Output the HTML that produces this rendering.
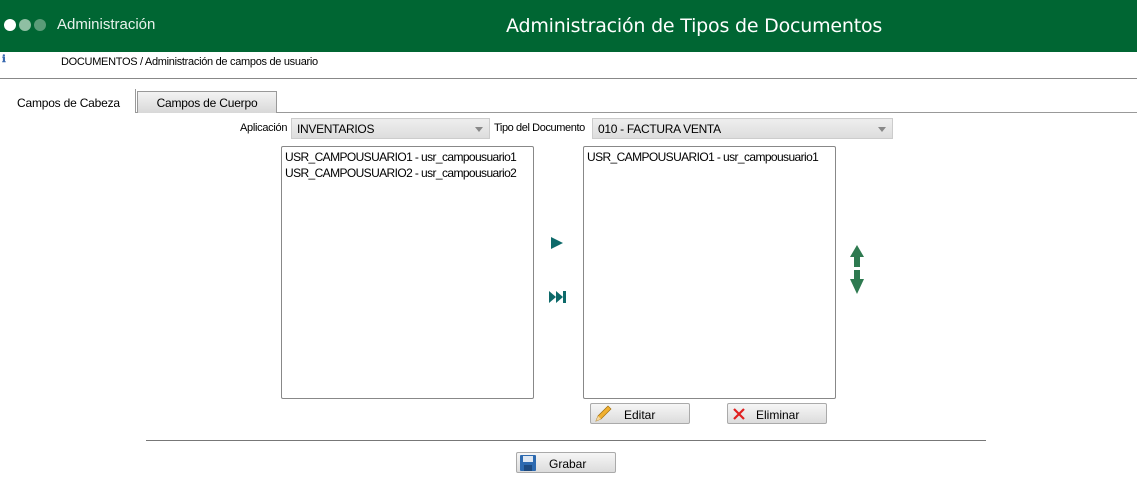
<!DOCTYPE html>
<html><head><meta charset="utf-8"><style>
body{margin:0;width:1137px;height:479px;background:#fff;font-family:"Liberation Sans",sans-serif;font-size:12px;color:#000;position:relative;overflow:hidden}
.a{position:absolute}
.hdr{left:0;top:0;width:1137px;height:52px;background:#006633}
.btn{position:absolute;height:21px;border:1px solid #aaa;border-radius:2px;background:linear-gradient(#f6f6f6,#dcdcdc);box-sizing:border-box;font-size:12px}
.combo{position:absolute;height:21px;background:linear-gradient(#eee,#ddd);border:1px solid #ccc;box-sizing:border-box;font-size:12px;padding:3px 5px;letter-spacing:-0.3px}
.combo:after{content:"";position:absolute;right:6px;top:8px;border-left:4px solid transparent;border-right:4px solid transparent;border-top:5px solid #888}
.list{position:absolute;border:1px solid #888;border-radius:2px;box-sizing:border-box;background:#fff;padding:2px 3px;font-size:12px;line-height:16px;letter-spacing:-0.6px;white-space:nowrap;overflow:hidden}
</style></head><body>
<div class="a hdr"></div>
<div class="a" style="left:4px;top:19px;width:12px;height:12px;border-radius:50%;background:#fff"></div>
<div class="a" style="left:19px;top:19px;width:12px;height:12px;border-radius:50%;background:#8fbfa3"></div>
<div class="a" style="left:34px;top:19px;width:12px;height:12px;border-radius:50%;background:#5a9c78"></div>
<div class="a" style="left:57px;top:16px;color:#e8f2ec;font-size:15px">Administración</div>
<div class="a" style="left:506px;top:15px;color:#fff;font-size:19px;font-family:'DejaVu Sans',sans-serif;letter-spacing:-0.2px">Administración de Tipos de Documentos</div>
<div class="a" style="left:2px;top:54px;color:#3a6ab0;font-size:10px;font-weight:bold">ℹ</div>
<div class="a" style="left:61px;top:56px;font-size:11px;letter-spacing:-0.3px">DOCUMENTOS / Administración de campos de usuario</div>
<div class="a" style="left:0;top:78px;width:1137px;height:1px;background:#888"></div>
<div class="a" style="left:0;top:112px;width:1137px;height:1px;background:#999"></div>
<div class="a" style="left:0;top:89px;width:136px;height:24px;background:#fff;border-right:1px solid #999;box-sizing:border-box"></div>
<div class="a" style="left:17px;top:96px;letter-spacing:-0.2px">Campos de Cabeza</div>
<div class="a" style="left:137px;top:91px;width:140px;height:22px;background:linear-gradient(#f3f3f3,#d8d8d8);border:1px solid #999;border-bottom:none;box-sizing:border-box;text-align:center;padding-top:4px;letter-spacing:-0.2px">Campos de Cuerpo</div>
<div class="a" style="left:240px;top:122px;font-size:11px;letter-spacing:-0.3px">Aplicación</div>
<div class="combo" style="left:291px;top:118px;width:199px">INVENTARIOS</div>
<div class="a" style="left:494px;top:122px;font-size:11px;letter-spacing:-0.4px">Tipo del Documento</div>
<div class="combo" style="left:592px;top:118px;width:301px">010 - FACTURA VENTA</div>
<div class="list" style="left:281px;top:146px;width:253px;height:253px">USR_CAMPOUSUARIO1 - usr_campousuario1<br>USR_CAMPOUSUARIO2 - usr_campousuario2</div>
<div class="list" style="left:583px;top:146px;width:253px;height:253px">USR_CAMPOUSUARIO1 - usr_campousuario1</div>
<svg class="a" style="left:550px;top:236px" width="14" height="14"><path d="M1 1L13 7L1 13Z" fill="#0e6a6a"/></svg>
<svg class="a" style="left:548px;top:290px" width="20" height="14"><path d="M1 1L8 7L1 13Z M8 1L15 7L8 13Z" fill="#0e6a6a"/><rect x="15" y="1" width="3" height="12" fill="#0e6a6a"/></svg>
<svg class="a" style="left:849px;top:244px" width="16" height="52"><path d="M8 1L15 13H11V23H5V13H1Z M5 26H11V35H15L8 50L1 35H5Z" fill="#2e7a50"/></svg>
<div class="btn" style="left:590px;top:403px;width:100px"><svg class="a" style="left:2px;top:1px" width="20" height="18"><path d="M3 16L5 11L15 1L18 4L8 14Z" fill="#f0b030" stroke="#a07010" stroke-width="0.7"/><path d="M3 16L5 11L8 14Z" fill="#f5d8a0"/></svg><span class="a" style="left:33px;top:4px">Editar</span></div>
<div class="btn" style="left:727px;top:403px;width:100px"><svg class="a" style="left:4px;top:3px" width="14" height="14"><path d="M2 2L12 12M12 2L2 12" stroke="#e02020" stroke-width="2.2"/></svg><span class="a" style="left:28px;top:4px">Eliminar</span></div>
<div class="a" style="left:146px;top:440px;width:840px;height:1px;background:#777"></div>
<div class="btn" style="left:516px;top:452px;width:100px"><svg class="a" style="left:2px;top:1px" width="18" height="18"><rect x="1" y="1" width="16" height="16" rx="1" fill="#2d6ab0"/><rect x="4" y="2" width="10" height="6" fill="#dfe8f3"/><rect x="5" y="11" width="8" height="6" fill="#1d4a80"/></svg><span class="a" style="left:32px;top:4px">Grabar</span></div>
</body></html>
